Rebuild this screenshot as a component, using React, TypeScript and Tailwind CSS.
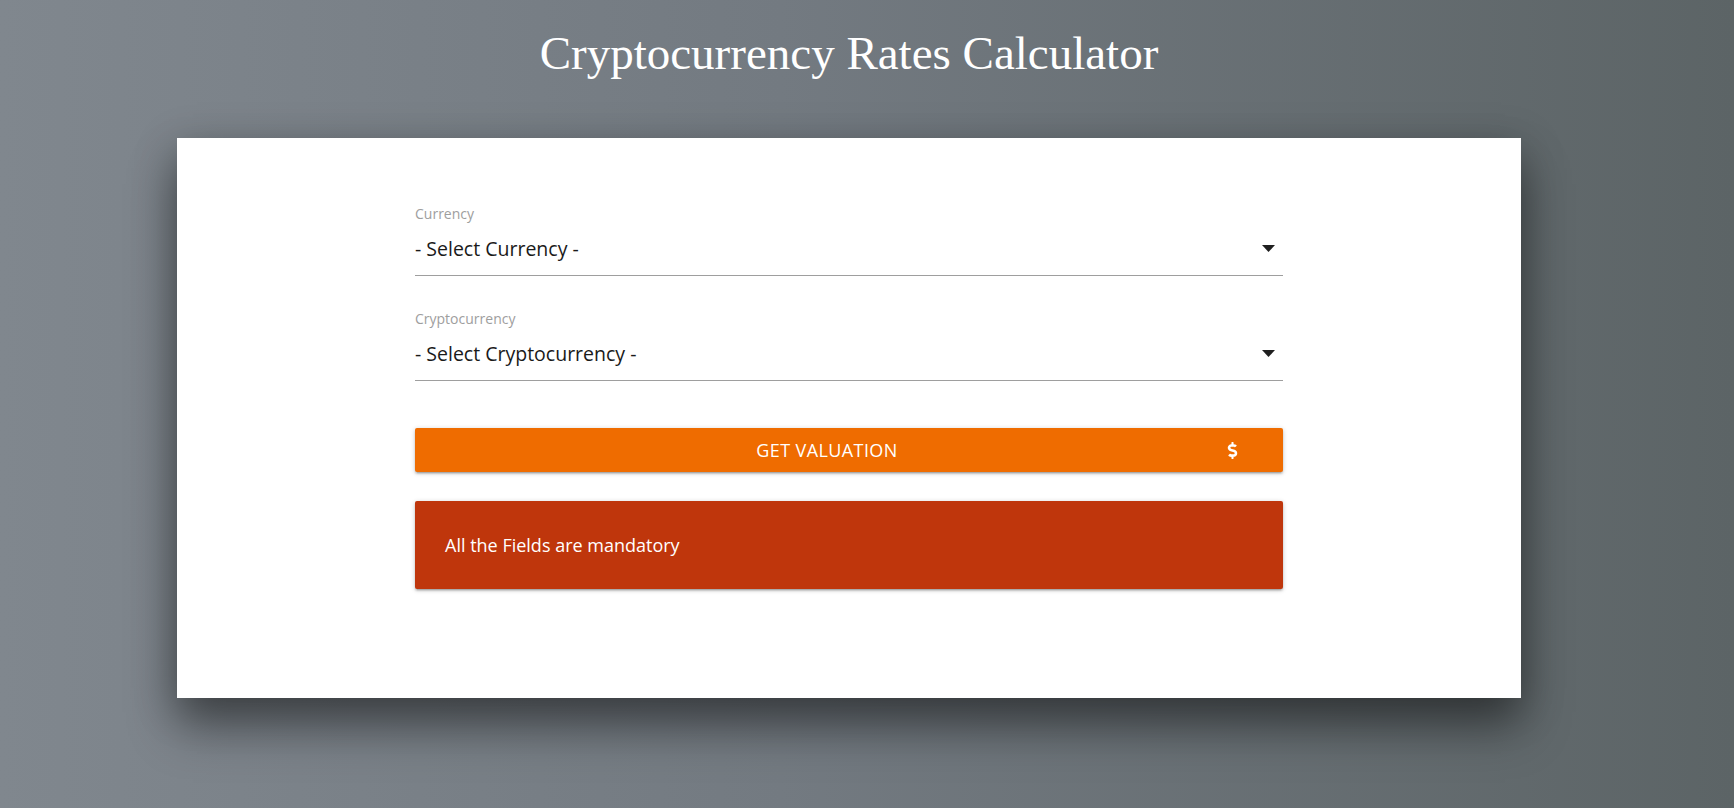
import React from "react";
import { FaDollarSign } from "react-icons/fa";

function Caret() {
  return (
    <svg width="13" height="7" viewBox="0 0 13 7" className="mr-[8px]">
      <path d="M0 0 L13 0 L6.5 7 Z" fill="#1f1f1f" />
    </svg>
  );
}

function Field({ label, value, first }: { label: string; value: string; first?: boolean }) {
  return (
    <div className={first ? "" : "mt-[34px]"}>
      <div className="text-[14px] leading-[17px] text-[#9e9e9e]">{label}</div>
      <div className="flex h-[54px] items-center justify-between border-b border-[#9e9e9e]">
        <span className="text-[19.5px] text-[#1a1a1a]">{value}</span>
        <Caret />
      </div>
    </div>
  );
}

export default function App() {
  return (
    <div
      className="min-h-[808px] w-full bg-[linear-gradient(90deg,#80878e_0%,#737a81_45%,#5c6466_100%)]"
      style={{ fontFamily: '"Open Sans", "Noto Sans", sans-serif' }}
    >
      <div className="ml-[177px] w-[1344px]">
        <div className="flex h-[138px] items-start justify-center pt-[23px]">
          <h1
            className="text-[47px] leading-[60px] text-white"
            style={{ fontFamily: '"Liberation Serif", "DejaVu Serif", serif' }}
          >
            Cryptocurrency Rates Calculator
          </h1>
        </div>
        <div className="h-[560px] bg-white pt-[67px] shadow-[0_30px_45px_rgba(0,0,0,0.38),0_10px_40px_rgba(0,0,0,0.25)]">
          <div className="mx-auto w-[868px]">
            <Field label="Currency" value="- Select Currency -" first />
            <Field label="Cryptocurrency" value="- Select Cryptocurrency -" />
            <button className="mt-[47px] flex h-[44px] w-full items-center rounded-[2px] bg-[#ef6c00] px-8 text-white shadow-[0_2px_2px_rgba(0,0,0,0.14),0_3px_1px_-2px_rgba(0,0,0,0.12),0_1px_5px_rgba(0,0,0,0.2)]">
              <span className="flex-1 text-center text-[18px] tracking-[0.4px]">GET VALUATION</span>
              <span className="ml-[6px] flex w-[38px] justify-center">
                <FaDollarSign className="h-[17px] w-[17px]" />
              </span>
            </button>
            <div className="mt-[29px] flex h-[88px] items-center rounded-[2px] bg-[#bf360c] px-[30px] text-[18px] text-white shadow-[0_2px_2px_rgba(0,0,0,0.14),0_3px_1px_-2px_rgba(0,0,0,0.12),0_1px_5px_rgba(0,0,0,0.2)]">
              All the Fields are mandatory
            </div>
          </div>
        </div>
      </div>
    </div>
  );
}
